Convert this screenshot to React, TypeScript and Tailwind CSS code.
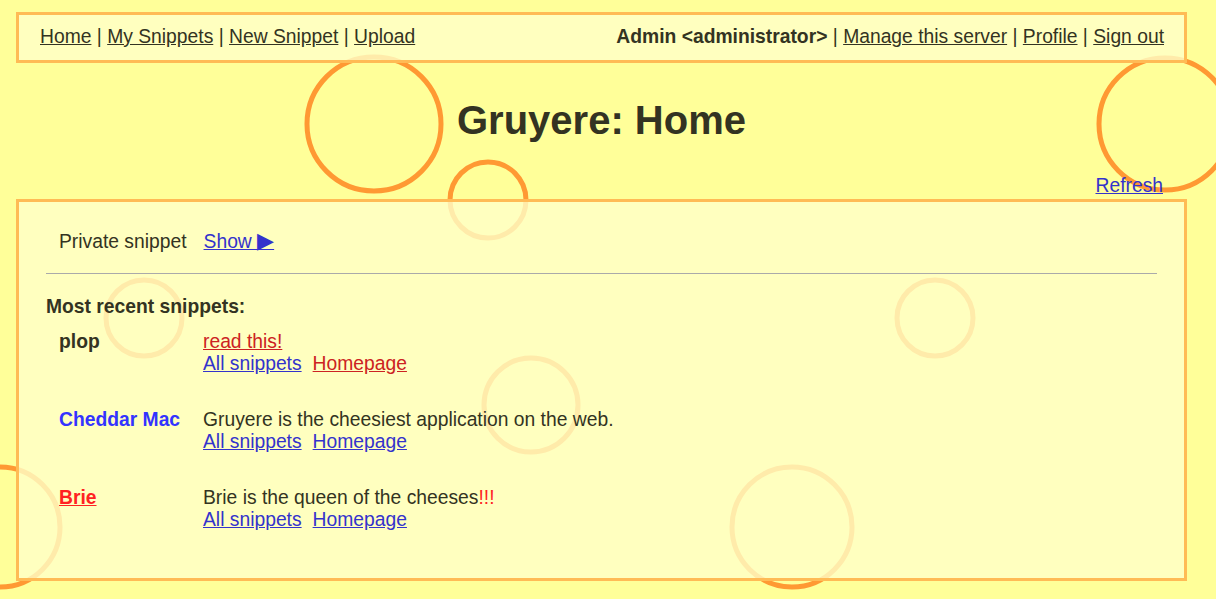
import React from "react";

const holes = [
  { cx: 374, cy: 124, r: 67 },
  { cx: 488, cy: 200, r: 38 },
  { cx: 1165, cy: 124, r: 66 },
  { cx: 0, cy: 527, r: 60 },
  { cx: 144, cy: 318, r: 38 },
  { cx: 531, cy: 405, r: 47 },
  { cx: 935, cy: 318, r: 38 },
  { cx: 792, cy: 527, r: 60 },
];

const Snippet = ({
  name,
  children,
  homeRed,
}: {
  name: React.ReactNode;
  children: React.ReactNode;
  homeRed?: boolean;
}) => (
  <div className="flex pl-[13px]">
    <div className="w-[144px] shrink-0">{name}</div>
    <div>
      <div>{children}</div>
      <div>
        <a href="#" className="underline text-[#3333cc] mr-[11px]">All snippets</a>
        <a href="#" className={homeRed ? "underline text-[#cc2222]" : "underline text-[#3333cc]"}>
          Homepage
        </a>
      </div>
    </div>
  </div>
);

export default function App() {
  return (
    <div
      className="relative w-[1216px] h-[599px] overflow-hidden bg-[#ffff99] text-[19.3px] leading-[22px] text-[#333322]"
      style={{ fontFamily: '"Liberation Sans", Arial, Helvetica, sans-serif' }}
    >
      {/* cheese holes */}
      <svg className="absolute inset-0" width="1216" height="599" viewBox="0 0 1216 599">
        {holes.map((h, i) => (
          <circle key={i} cx={h.cx} cy={h.cy} r={h.r} fill="none" stroke="#ff9933" strokeWidth="5" />
        ))}
      </svg>

      <div className="relative z-10 ml-[16px] w-[1171px] pt-[12px]">
        {/* menu bar */}
        <div className="h-[51px] border-[3px] border-[#ffbb55] bg-[rgba(255,255,200,0.8)] flex items-center justify-between pl-[21px] pr-[20px] pb-[1px]">
          <div>
            <a href="#" className="underline">Home</a> | <a href="#" className="underline">My Snippets</a> |{" "}
            <a href="#" className="underline">New Snippet</a> | <a href="#" className="underline">Upload</a>
          </div>
          <div>
            <b>Admin &lt;administrator&gt;</b> | <a href="#" className="underline">Manage this server</a> |{" "}
            <a href="#" className="underline">Profile</a> | <a href="#" className="underline">Sign out</a>
          </div>
        </div>

        <h1 className="mt-[34px] text-center text-[40px] leading-[46px] font-bold">Gruyere: Home</h1>

        <div className="mt-[32px] text-right pr-[24px]">
          <a href="#" className="underline text-[#3333cc]">Refresh</a>
        </div>

        {/* main panel */}
        <div className="mt-[2px] h-[382px] border-[3px] border-[#ffbb55] bg-[rgba(255,255,200,0.8)] px-[27px] pt-[28px]">
          <div className="pl-[13px]">
            Private snippet
            <a href="#" className="underline text-[#3333cc] ml-[17px]">
              Show <span className="text-[22px]">▶</span>
            </a>
          </div>
          <hr className="mt-[20px] border-0 h-px bg-[#aaaaaa]" />
          <div className="mt-[22px] font-bold">Most recent snippets:</div>
          <div className="mt-[13px] flex flex-col gap-[34px]">
            <Snippet name={<b>plop</b>} homeRed>
              <a href="#" className="underline text-[#cc2222]">read this!</a>
            </Snippet>
            <Snippet name={<b className="text-[#3333ff]">Cheddar Mac</b>}>
              Gruyere is the cheesiest application on the web.
            </Snippet>
            <Snippet name={<a href="#" className="font-bold underline text-[#ff2222]">Brie</a>}>
              Brie is the queen of the cheeses<span className="text-[#ff2222]">!!!</span>
            </Snippet>
          </div>
        </div>
      </div>
    </div>
  );
}
